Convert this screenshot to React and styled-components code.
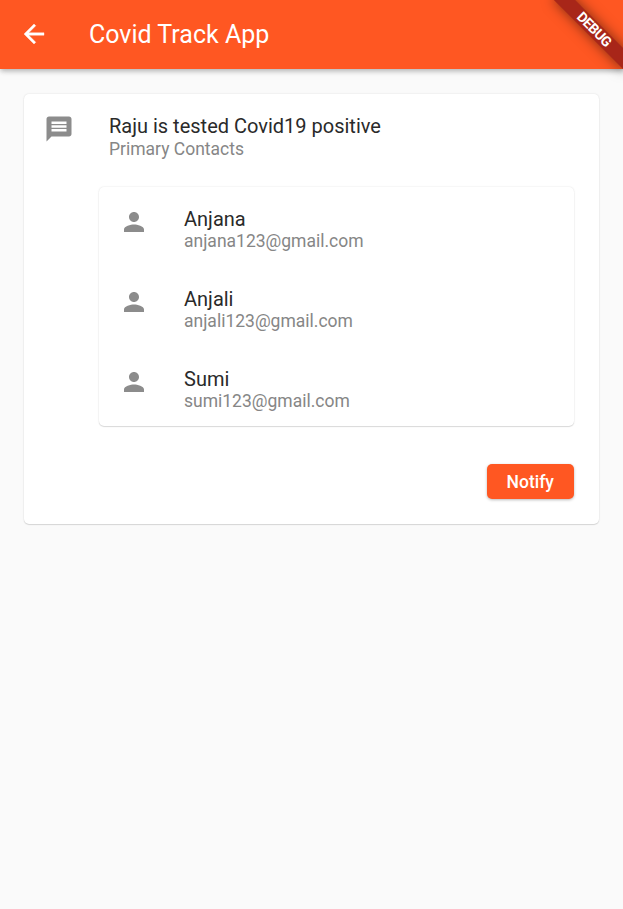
import React from "react";
import styled, { createGlobalStyle } from "styled-components";

const GlobalStyle = createGlobalStyle`
  * { box-sizing: border-box; }
  html, body { margin: 0; padding: 0; }
  body {
    background: #fafafa;
    font-family: Roboto, "Liberation Sans", sans-serif;
    overflow: hidden;
  }
`;

const Screen = styled.div`
  position: relative;
  height: 100vh;
  overflow: hidden;
  background: #fafafa;
`;

const AppBar = styled.header`
  display: flex;
  align-items: center;
  height: 69px;
  padding: 0 19px 1px;
  gap: 40px;
  background: #ff5722;
  color: #fff;
  box-shadow: 0 2px 5px -1px rgba(0, 0, 0, 0.2), 0 3px 5px rgba(0, 0, 0, 0.1),
    0 1px 8px rgba(0, 0, 0, 0.06);
`;

const BackButton = styled.button`
  display: flex;
  padding: 0;
  border: 0;
  background: none;
  color: inherit;
`;

const Icon = styled.svg`
  display: block;
  flex: none;
  width: 30px;
  height: 30px;
  fill: currentColor;
`;

const AppTitle = styled.h1`
  margin: 0;
  padding-top: 2px;
  font-size: 25px;
  font-weight: 400;
  line-height: 30px;
  letter-spacing: 0;
  white-space: nowrap;
`;

const Card = styled.section`
  background: #fff;
  border-radius: 5px;
  box-shadow: 0 1px 1px rgba(0, 0, 0, 0.12), 0 0 2px rgba(0, 0, 0, 0.12);
`;

const AlertCard = styled(Card)`
  margin: 25px 24px 0;
  height: 430px;
  padding: 20px 25px 25px 20px;
  display: flex;
  flex-direction: column;
`;

const ListTile = styled.div`
  display: flex;
  gap: 35px;
  color: #8c8c8c;
`;

const TileText = styled.div`
  min-width: 0;
  white-space: nowrap;
`;

const TileTitle = styled.div`
  color: #2a2a2a;
  font-size: 20px;
  line-height: 24px;
`;

const TileSubtitle = styled.div`
  color: #868686;
  font-size: 17.5px;
  line-height: 20px;
  margin-top: ${({ $offset = 0 }) => $offset}px;
`;

const ContactsCard = styled(Card)`
  margin: 28px 0 0 55px;
  height: 239px;
`;

const ContactTile = styled(ListTile)`
  height: 80px;
  padding: 20px 20px 0;
`;

const Actions = styled.div`
  display: flex;
  justify-content: flex-end;
  margin-top: auto;
`;

const NotifyButton = styled.button`
  width: 87.5px;
  height: 35px;
  padding: 1px 0 0;
  border: 0;
  border-radius: 5px;
  background: #ff5722;
  color: #fff;
  font: 500 17.5px/35px Roboto, "Liberation Sans", sans-serif;
  box-shadow: 0 1px 3px rgba(0, 0, 0, 0.28);
`;

const DebugBanner = styled.div`
  position: absolute;
  top: 21.5px;
  right: -21px;
  width: 100px;
  height: 15px;
  transform: rotate(45deg);
  background: #a82619;
  box-shadow: 0 0 13px rgba(0, 0, 0, 0.5);
  color: #fff;
  font-size: 14px;
  font-weight: 700;
  letter-spacing: -0.5px;
  line-height: 15px;
  text-align: center;
`;

const contacts = [
  { name: "Anjana", email: "anjana123@gmail.com" },
  { name: "Anjali", email: "anjali123@gmail.com" },
  { name: "Sumi", email: "sumi123@gmail.com" },
];

const BackIcon = () => (
  <Icon viewBox="0 0 24 24" stroke="currentColor" strokeWidth="0.3">
    <path d="M20 11H7.83l5.59-5.59L12 4l-8 8 8 8 1.41-1.41L7.83 13H20v-2z" />
  </Icon>
);

const MessageIcon = () => (
  <Icon viewBox="0 0 24 24">
    <path d="M20 2H4c-1.1 0-1.99.9-1.99 2L2 22l4-4h14c1.1 0 2-.9 2-2V4c0-1.1-.9-2-2-2zm-2 12H6v-2h12v2zm0-3H6V9h12v2zm0-3H6V6h12v2z" />
  </Icon>
);

const PersonIcon = () => (
  <Icon viewBox="0 0 24 24">
    <path d="M12 12c2.21 0 4-1.79 4-4s-1.79-4-4-4-4 1.79-4 4 1.79 4 4 4zm0 2c-2.67 0-8 1.34-8 4v2h16v-2c0-2.66-5.33-4-8-4z" />
  </Icon>
);

export default function App() {
  return (
    <>
      <GlobalStyle />
      <Screen>
        <AppBar>
          <BackButton aria-label="Back">
            <BackIcon />
          </BackButton>
          <AppTitle>Covid Track App</AppTitle>
        </AppBar>
        <AlertCard>
          <ListTile>
            <MessageIcon />
            <TileText>
              <TileTitle>Raju is tested Covid19 positive</TileTitle>
              <TileSubtitle $offset={1}>Primary Contacts</TileSubtitle>
            </TileText>
          </ListTile>
          <ContactsCard>
            {contacts.map((contact) => (
              <ContactTile key={contact.email}>
                <PersonIcon />
                <TileText>
                  <TileTitle>{contact.name}</TileTitle>
                  <TileSubtitle>{contact.email}</TileSubtitle>
                </TileText>
              </ContactTile>
            ))}
          </ContactsCard>
          <Actions>
            <NotifyButton>Notify</NotifyButton>
          </Actions>
        </AlertCard>
        <DebugBanner>DEBUG</DebugBanner>
      </Screen>
    </>
  );
}
